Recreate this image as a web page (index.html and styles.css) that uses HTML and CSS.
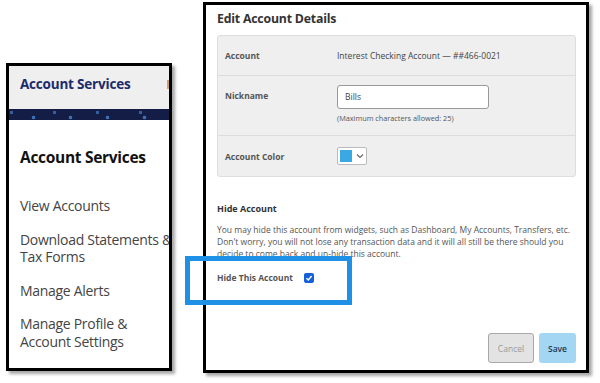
FILE: index.html
```html
<!DOCTYPE html>
<html lang="en">
  <head>
    <meta charset="UTF-8" />
    <meta name="viewport" content="width=device-width, initial-scale=1.0" />
    <link rel="stylesheet" href="styles.css">
    <title>Hide Account</title>
  </head>
  <body>
    <!-- left screenshot: account services menu -->
    <section class="shot menu-shot">
      <header class="menu-top">
        <span class="brand">Account Services</span>
        <span class="next-tab"></span>
      </header>
      <div class="band"></div>
      <div class="menu-body">
        <h2>Account Services</h2>
        <ul class="links">
          <li>View Accounts</li>
          <li>Download Statements &amp;<br>Tax Forms</li>
          <li>Manage Alerts</li>
          <li>Manage Profile &amp;<br>Account Settings</li>
        </ul>
      </div>
    </section>

    <!-- right screenshot: edit dialog -->
    <section class="shot dialog-shot">
      <h1>Edit Account Details</h1>
      <div class="details">
        <div class="row">
          <span class="label">Account</span>
          <span class="value">Interest Checking Account — ##466-0021</span>
        </div>
        <div class="row tall">
          <span class="label">Nickname</span>
          <div class="value">
            <div class="input">Bills</div>
            <p class="hint">(Maximum characters allowed: 25)</p>
          </div>
        </div>
        <div class="row">
          <span class="label">Account Color</span>
          <div class="value">
            <div class="color-pick">
              <span class="swatch"></span>
              <svg width="8" height="6" viewBox="0 0 8 6"><path d="M1 1.5 4 4.5 7 1.5" fill="none" stroke="#666" stroke-width="1.2"/></svg>
            </div>
          </div>
        </div>
      </div>

      <h3>Hide Account</h3>
      <p class="about">You may hide this account from widgets, such as Dashboard, My Accounts, Transfers, etc. Don't worry, you will not lose any transaction data and it will all still be there should you decide to come back and un-hide this account.</p>

      <div class="hide-row">
        <span>Hide This Account</span>
        <span class="check">
          <svg width="8" height="8" viewBox="0 0 8 8"><path d="M1.5 4.2 3.3 6 6.6 2" fill="none" stroke="#fff" stroke-width="1.4"/></svg>
        </span>
      </div>

      <div class="actions">
        <button class="btn cancel">Cancel</button>
        <button class="btn save">Save</button>
      </div>
    </section>

    <div class="callout"></div>
  </body>
</html>
```

FILE: styles.css
```css
* {
  margin: 0;
  padding: 0;
  box-sizing: border-box;
}

body {
  position: relative;
  width: 600px;
  height: 383px;
  overflow: hidden;
  background: #fff;
  font-family: "Open Sans", "Noto Sans", sans-serif;
  color: #333;
}

/* SCREENSHOT FRAMES */
.shot {
  position: absolute;
  background: #fff;
  border: 3px solid #000;
  box-shadow: 3px 3px 3px rgba(0, 0, 0, 0.35);
}

.menu-shot {
  left: 6px;
  top: 63px;
  width: 166px;
  height: 308px;
  overflow: hidden;
}

.dialog-shot {
  left: 203px;
  top: 2px;
  width: 386px;
  height: 371px;
  padding: 6px 10px 0 11px;
  display: flex;
  flex-direction: column;
}

/* LEFT MENU */
.menu-top {
  height: 43px;
  background: #efefef;
  display: flex;
  align-items: flex-start;
  justify-content: space-between;
  padding: 9px 0 0 11px;
}

.brand {
  font-size: 13.5px;
  line-height: 18px;
  font-weight: 700;
  color: #1b2a6b;
  letter-spacing: -0.2px;
}

.next-tab {
  width: 2px;
  height: 9px;
  margin-top: 5px;
  background: #d6a450;
}

.band {
  height: 11px;
  background-color: #131d45;
  background-image:
    radial-gradient(circle, #3d6fb5 1.6px, transparent 2.1px),
    radial-gradient(circle, #34609f 1.4px, transparent 1.9px);
  background-size: 37px 11px, 43px 11px;
  background-position: 6px 3px, 24px -2px;
}

.menu-body {
  padding: 28px 0 0 11px;
}

.menu-body h2 {
  font-size: 15.5px;
  font-weight: 700;
  color: #111;
  line-height: 18px;
  margin-bottom: 31px;
  letter-spacing: -0.3px;
}

.links {
  list-style: none;
  font-size: 14px;
  line-height: 17.5px;
  color: #444;
  letter-spacing: -0.3px;
  white-space: nowrap;
}

.links li {
  margin-bottom: 16px;
}

/* RIGHT DIALOG */
h1 {
  font-size: 12.3px;
  font-weight: 700;
  color: #333;
  line-height: 16px;
  margin-bottom: 8px;
  letter-spacing: -0.2px;
}

.details {
  background: #efefef;
  border: 1px solid #dedede;
  border-radius: 3px;
  font-size: 8.5px;
}

.row {
  display: flex;
  align-items: center;
  height: 40px;
  padding-left: 7px;
  border-bottom: 1px solid #dcdcdc;
}

.row:last-child {
  border-bottom: none;
}

.row.tall {
  height: 60px;
  align-items: flex-start;
  padding-top: 14px;
}

.label {
  width: 112px;
  font-weight: 700;
  color: #555;
}

.value {
  color: #444;
}

.tall .value {
  margin-top: -5px;
}

.input {
  width: 152px;
  height: 24px;
  background: #fff;
  border: 1px solid #999;
  border-radius: 3px;
  padding: 5px 7px;
  font-size: 8.5px;
  color: #444;
}

.hint {
  font-size: 7.3px;
  color: #555;
  margin-top: 4px;
}

.color-pick {
  width: 30px;
  height: 18px;
  background: #fff;
  border: 1px solid #bbb;
  border-radius: 2px;
  display: flex;
  align-items: center;
  gap: 4px;
  padding-left: 2px;
}

.swatch {
  width: 12px;
  height: 12px;
  background: #3aa8e2;
}

h3 {
  font-size: 9px;
  font-weight: 700;
  color: #333;
  margin-top: 26px;
  line-height: 12px;
}

.about {
  font-size: 8.5px;
  line-height: 12px;
  color: #555;
  margin-top: 9px;
}

.hide-row {
  display: flex;
  align-items: center;
  gap: 11px;
  margin-top: 12px;
  font-size: 8.5px;
  font-weight: 700;
  color: #555;
}

.check {
  width: 10px;
  height: 10px;
  border-radius: 2px;
  background: #1560d8;
  display: flex;
  align-items: center;
  justify-content: center;
}

.actions {
  margin-top: auto;
  margin-bottom: 7px;
  display: flex;
  justify-content: flex-end;
  gap: 5px;
}

.btn {
  height: 30px;
  border-radius: 3px;
  font-family: inherit;
  font-size: 8.5px;
}

.cancel {
  width: 46px;
  background: #e3e3e3;
  border: 1px solid #a8a8a8;
  color: #999;
}

.save {
  width: 37px;
  background: #a3d6f3;
  border: none;
  color: #1d3650;
  font-weight: 600;
}

/* blue highlight drawn over the screenshot */
.callout {
  position: absolute;
  left: 185px;
  top: 256px;
  width: 167px;
  height: 49px;
  border: 5px solid #1e90e6;
}
```
